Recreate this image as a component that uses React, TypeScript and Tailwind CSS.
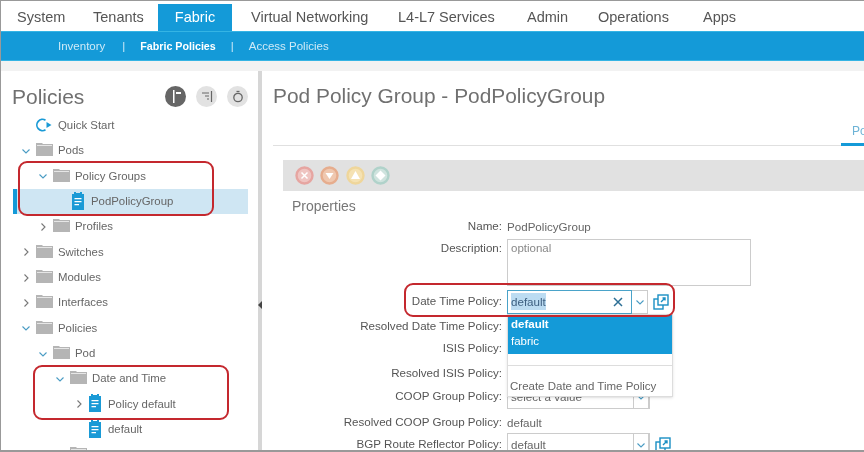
import type { ReactNode } from "react";

const NAV = [
  { label: "System", className: "ml-[16px] w-[76px] pt-[3px]" },
  { label: "Tenants", className: "w-[65px] pt-[3px]" },
  { label: "Fabric", className: "w-[74px] justify-center mt-[3px] bg-[#149ad8] text-white" },
  { label: "Virtual Networking", className: "ml-[19px] w-[147px] pt-[3px]" },
  { label: "L4-L7 Services", className: "w-[129px] pt-[3px]" },
  { label: "Admin", className: "w-[71px] pt-[3px]" },
  { label: "Operations", className: "w-[105px] pt-[3px]" },
  { label: "Apps", className: "w-[40px] pt-[3px]" },
];

function Chevron({ open, className = "" }: { open?: boolean; className?: string }) {
  return (
    <svg width="10" height="10" viewBox="0 0 10 10" fill="none" className={className}>
      {open ? (
        <path d="M1.500 3.500l3.500 3.500 3.500-3.500" stroke="#4a9cc4" strokeWidth="1.1" />
      ) : (
        <path d="M3.500 1.500l3.500 3.500-3.500 3.500" stroke="#777" strokeWidth="1.1" />
      )}
    </svg>
  );
}

function Folder() {
  return (
    <svg width="17" height="14" viewBox="0 0 17 14" className="shrink-0 mb-[3px]">
      <path d="M0 1h6l1 1h10v12H0z" fill="#b5b5b5" />
      <path d="M1 3h15v1H1z" fill="#e6e6e6" />
    </svg>
  );
}

function PolicyFile() {
  return (
    <svg width="12" height="18" viewBox="0 0 12 18" className="shrink-0 mb-[2px]">
      <path d="M0 2h2V0h2v1h4V0h2v2h2v16H0z" fill="#1a9ad6" />
      <path d="M2.5 6h7v1.3h-7zM2.5 9h7v1.3h-7zM2.5 12h4.5v1.3H2.5z" fill="#fff" />
    </svg>
  );
}

type TreeRowProps = {
  x: string;
  label: string;
  icon?: "folder" | "file" | "start";
  chevron?: "open" | "closed";
  selected?: boolean;
};

// x is the left padding, the chevron sits in a fixed 15px slot after it
function TreeRow({ x, label, icon = "folder", chevron, selected }: TreeRowProps) {
  return (
    <div className={`h-[25.33px] flex items-center ${x} ${selected ? "bg-[#cfe6f3] border-l-[4px] border-[#149ad8]" : ""}`}>
      <span className="w-[15px] shrink-0 flex">{chevron && <Chevron open={chevron === "open"} />}</span>
      {icon === "folder" && <Folder />}
      {icon === "file" && <PolicyFile />}
      {icon === "start" && (
        <svg width="17" height="14" viewBox="0 0 17 14" className="shrink-0 mb-[2px]">
          <path d="M9.5 2.3A5.6 5.6 0 1 0 9.5 11.7" fill="none" stroke="#1a9ad6" strokeWidth="1.7" />
          <path d="M10.5 4l5 3-5 3z" fill="#1a9ad6" />
        </svg>
      )}
      <span className={`text-[11.4px] text-[#666] whitespace-nowrap ${icon === "file" ? "ml-[7px]" : "ml-[5px]"}`}>{label}</span>
    </div>
  );
}

function Round({ dark, children }: { dark?: boolean; children: ReactNode }) {
  return (
    <span className={`w-[21px] h-[21px] rounded-full flex items-center justify-center ${dark ? "bg-[#666]" : "bg-[#e2e2e2]"}`}>
      {children}
    </span>
  );
}

function FormRow({ label, h, children }: { label: string; h: string; children?: ReactNode }) {
  return (
    <div className={`flex items-center ${h}`}>
      <span className="w-[240px] shrink-0 text-right text-[11.6px] text-[#555] whitespace-nowrap">{label}:</span>
      <div className="ml-[5px] flex items-center text-[11.6px] text-[#666] pt-[1px]">{children}</div>
    </div>
  );
}

function LinkOut() {
  return (
    <svg width="16" height="16" viewBox="0 0 16 16" fill="none" stroke="#1a8fc4" strokeWidth="1.4" className="ml-[5px]">
      <rect x="1" y="5" width="9" height="10" />
      <rect x="5" y="1" width="10" height="10" fill="#fff" />
      <path d="M8 8l4-4M9.5 4H12v2.5" />
    </svg>
  );
}

function SelectBox({ value, focused }: { value: string; focused?: boolean }) {
  return (
    <div className={`flex h-[24px] ${focused ? "" : "border border-[#ccc]"}`}>
      <div className={`w-[125px] flex items-center pl-[3px] ${focused ? "border border-[#4aa3c9]" : ""}`}>
        <span className={focused ? "bg-[#bcdcf2] text-[#3d5f80]" : "text-[#666]"}>{value}</span>
        {focused && (
          <svg width="10" height="10" viewBox="0 0 10 10" className="ml-auto mr-[8px]" stroke="#2c6f95" strokeWidth="1.5">
            <path d="M1 1l8 8M9 1l-8 8" />
          </svg>
        )}
      </div>
      <div className={`w-[16px] flex items-center justify-center border-r border-[#ccc] ${focused ? "border-y" : "border-l"}`}>
        <Chevron open />
      </div>
    </div>
  );
}

function Fault({ color, ring, children }: { color: string; ring: string; children: ReactNode }) {
  return (
    <svg width="19" height="19" viewBox="0 0 19 19">
      <circle cx="9.5" cy="9.5" r="8" fill={color} stroke={ring} strokeWidth="2.4" />
      {children}
    </svg>
  );
}

export default function App() {
  return (
    <div className="relative w-[864px] h-[452px] overflow-hidden bg-white border-t border-l border-[#999] font-['Liberation_Sans',Arial,sans-serif] blur-[0.35px]">
      <nav className="h-[30px] flex text-[14.5px] text-[#555]">
        {NAV.map((item) => (
          <div key={item.label} className={`flex items-center whitespace-nowrap shrink-0 ${item.className}`}>
            {item.label}
          </div>
        ))}
      </nav>
      <div className="h-[30px] bg-[#149ad8] border-y border-[#35b4e4] flex items-center pl-[57px] pt-[1px] text-[11.5px] text-[#cfeaf7]">
        <span>Inventory</span>
        <span className="ml-[17px]">|</span>
        <span className="ml-[15px] font-bold text-[10.7px] text-white">Fabric Policies</span>
        <span className="ml-[15px]">|</span>
        <span className="ml-[15px]">Access Policies</span>
      </div>
      <div className="h-[10px] bg-[#f2f2f2]" />

      <div className="flex h-[380px]">
        <aside className="w-[257px] shrink-0 overflow-hidden">
          <div className="h-[42px] flex items-center pt-[8px] pl-[11px] pr-[10px]">
            <h2 className="text-[21px] text-[#707070] leading-none">Policies</h2>
            <div className="ml-auto flex gap-[10px]">
              <Round dark>
                <svg width="13" height="13" viewBox="0 0 13 13" fill="#fff">
                  <path d="M4 0h1.5v13H4zM7 2h5v2H7z" />
                </svg>
              </Round>
              <Round>
                <svg width="12" height="11" viewBox="0 0 12 11" stroke="#666" strokeWidth="1.2">
                  <path d="M1 2h7M4 5h4M6 8h2M10.500 0v11" />
                </svg>
              </Round>
              <Round>
                <svg width="12" height="13" viewBox="0 0 12 13" fill="none" stroke="#666" strokeWidth="1.3">
                  <circle cx="6" cy="7.500" r="4.200" />
                  <path d="M4.500 1.500h3" />
                </svg>
              </Round>
            </div>
          </div>
          <div className="pl-[4px]">
            <TreeRow x="pl-[16px]" label="Quick Start" icon="start" />
            <TreeRow x="pl-[16px]" label="Pods" chevron="open" />
            <div className="ml-[8px]">
              <TreeRow x="pl-[25px]" label="Policy Groups" chevron="open" />
              <TreeRow x="pl-[40px] w-[235px]" label="PodPolicyGroup" icon="file" selected />
              <TreeRow x="pl-[25px]" label="Profiles" chevron="closed" />
            </div>
            <TreeRow x="pl-[16px]" label="Switches" chevron="closed" />
            <TreeRow x="pl-[16px]" label="Modules" chevron="closed" />
            <TreeRow x="pl-[16px]" label="Interfaces" chevron="closed" />
            <TreeRow x="pl-[16px]" label="Policies" chevron="open" />
            <TreeRow x="pl-[33px]" label="Pod" chevron="open" />
            <TreeRow x="pl-[50px]" label="Date and Time" chevron="open" />
            <TreeRow x="pl-[69px]" label="Policy default" icon="file" chevron="closed" />
            <TreeRow x="pl-[69px]" label="default" icon="file" />
            <TreeRow x="pl-[50px]" label="SNMP" chevron="closed" />
          </div>
        </aside>

        <div className="w-[4px] shrink-0 bg-[#d6d6d6] pt-[230px]">
          <svg width="4" height="8" viewBox="0 0 4 8">
            <path d="M0 4l4-4v8z" fill="#444" />
          </svg>
        </div>

        <main className="flex-1 min-w-0">
          <h1 className="h-[42px] flex items-center pt-[8px] pl-[11px] text-[20.9px] text-[#707070] whitespace-nowrap">
            Pod Policy Group - PodPolicyGroup
          </h1>
          <div className="ml-[11px] h-[33px] border-b border-[#e0e0e0] flex justify-end">
            <span className="w-[23px] pl-[11px] overflow-hidden h-[33px] border-b-[3px] border-[#149ad8] text-[12px] text-[#6db3d6] pt-[9px]">
              Policy
            </span>
          </div>
          <div className="ml-[21px] mt-[14px] h-[31px] bg-[#e1e1e1] flex items-center gap-[6.300px] pl-[12px]">
            <Fault color="#efc4c1" ring="#e6a5a1">
              <path d="M6.500 6.500l6 6M12.500 6.500l-6 6" stroke="#fff" strokeWidth="1.500" />
            </Fault>
            <Fault color="#efc8b0" ring="#e6ad8e">
              <path d="M5.500 7h8l-4 6z" fill="#fff" />
            </Fault>
            <Fault color="#f5e2b3" ring="#efd69b">
              <path d="M9.500 5l4.500 8H5z" fill="#fff" />
            </Fault>
            <Fault color="#cfe3de" ring="#b0d2ca">
              <path d="M9.500 4.500l5 5-5 5-5-5z" fill="#fff" />
            </Fault>
          </div>
          <div className="ml-[30px] h-[30px] flex items-center text-[14px] text-[#777]">Properties</div>

          <FormRow label="Name" h="h-[22px] mt-[-6px]">
            PodPolicyGroup
          </FormRow>
          <div className="flex h-[47px] mt-[2px]">
            <span className="w-[240px] shrink-0 text-right text-[11.6px] text-[#555]">Description:</span>
            <div className="ml-[5px] w-[244px] border border-[#ccc] px-[3px] text-[11.5px] text-[#888]">optional</div>
          </div>
          <FormRow label="Date Time Policy" h="h-[30px]">
            <SelectBox value="default" focused />
            <LinkOut />
          </FormRow>
          <FormRow label="Resolved Date Time Policy" h="h-[20px]" />
          <FormRow label="ISIS Policy" h="h-[24px]" />
          <FormRow label="Resolved ISIS Policy" h="h-[26px]" />
          <FormRow label="COOP Group Policy" h="h-[20px]">
            <SelectBox value="select a value" />
          </FormRow>
          <FormRow label="Resolved COOP Group Policy" h="h-[26px] mt-[3px]">
            default
          </FormRow>
          <FormRow label="BGP Route Reflector Policy" h="h-[18px]">
            <SelectBox value="default" />
            <LinkOut />
          </FormRow>
        </main>
      </div>

      {/* dropdown of the focused select */}
      <div className="absolute left-[506px] top-[313px] w-[166px] h-[83px] bg-white border border-[#ddd] shadow-sm text-[11.5px]">
        <div className="h-[39px] bg-[#149ad8] text-white pl-[3px] pt-[1px] leading-[17px]">
          <div className="font-bold">default</div>
          <div>fabric</div>
        </div>
        <div className="mt-[11px] border-t border-[#ddd] pt-[12px] pl-[2px] text-[#666] whitespace-nowrap">
          Create Date and Time Policy
        </div>
      </div>

      {/* callouts */}
      <div className="absolute left-[17px] top-[160px] w-[196px] h-[55px] rounded-[9px] border-2 border-[#c4282e]" />
      <div className="absolute left-[32px] top-[364px] w-[196px] h-[55px] rounded-[9px] border-2 border-[#c4282e]" />
      <div className="absolute left-[403px] top-[282px] w-[271px] h-[34px] rounded-[9px] border-2 border-[#c4282e]" />
      <div className="absolute left-0 right-0 bottom-0 h-[2px] bg-[#999]" />
    </div>
  );
}
